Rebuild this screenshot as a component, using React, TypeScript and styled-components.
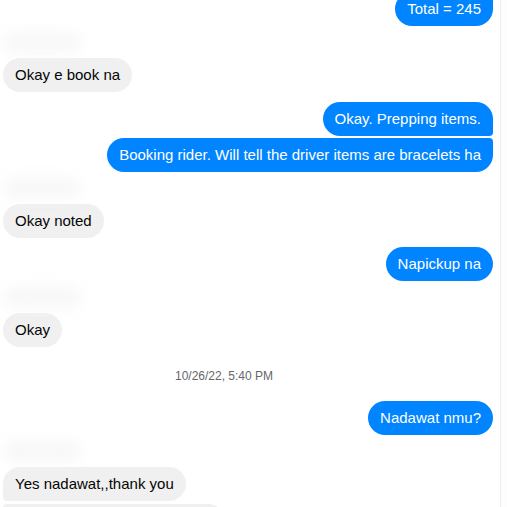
import React from "react";
import styled, { createGlobalStyle, css } from "styled-components";

// Types
type Pos = "single" | "first" | "middle" | "last";

type Message = {
  kind: "msg";
  text: string;
  out: boolean;
  pos: Pos;
  top: number;
  sender?: boolean;
  width?: number;
};

type Stamp = {
  kind: "stamp";
  text: string;
};

type Item = Message | Stamp;

// Data
const items: Item[] = [
  { kind: "msg", text: "Total = 245", out: true, pos: "last", top: -8 },
  { kind: "msg", text: "Okay e book na", out: false, pos: "single", top: 0, sender: true },
  { kind: "msg", text: "Okay. Prepping items.", out: true, pos: "first", top: 10 },
  { kind: "msg", text: "Booking rider. Will tell the driver items are bracelets ha", out: true, pos: "last", top: 2 },
  { kind: "msg", text: "Okay noted", out: false, pos: "single", top: 0, sender: true },
  { kind: "msg", text: "Napickup na", out: true, pos: "single", top: 9 },
  { kind: "msg", text: "Okay", out: false, pos: "single", top: 0, sender: true },
  { kind: "stamp", text: "10/26/22, 5:40 PM" },
  { kind: "msg", text: "Nadawat nmu?", out: true, pos: "single", top: 0 },
  { kind: "msg", text: "Yes nadawat,,thank you", out: false, pos: "first", top: 0, sender: true },
  // next bubble only peeks in at the bottom edge
  { kind: "msg", text: "", out: false, pos: "last", top: 3, width: 222 },
];

// Styles
const GlobalStyle = createGlobalStyle`
  html, body {
    margin: 0;
    padding: 0;
    background: #ffffff;
    overflow: hidden;
  }
  body {
    font-family: "Liberation Sans", Arial, sans-serif;
  }
`;

const Root = styled.div`
  width: 507px;
  height: 507px;
  display: flex;
  overflow: hidden;
`;

const Thread = styled.div`
  width: 500px;
  padding: 0 7px 0 3px;
  box-sizing: border-box;
  display: flex;
  flex-direction: column;
  & > * {
    flex-shrink: 0;
  }
`;

const ScrollEdge = styled.div`
  flex: 1;
  border-left: 1px solid #efefef;
  background: #fdfdfd;
`;

const Row = styled.div<{ $out: boolean; $top: number }>`
  display: flex;
  justify-content: ${(p) => (p.$out ? "flex-end" : "flex-start")};
  margin-top: ${(p) => p.$top}px;
`;

const big = "18px";
const small = "4px";

const radius = (out: boolean, pos: Pos) => {
  const a = pos === "single" || pos === "first" ? big : small;
  const b = pos === "single" || pos === "last" ? big : small;
  return out
    ? css`border-radius: ${big} ${a} ${b} ${big};`
    : css`border-radius: ${a} ${big} ${big} ${b};`;
};

const Bubble = styled.div<{ $out: boolean; $pos: Pos; $width?: number }>`
  height: 34px;
  line-height: 34px;
  padding: 0 12px;
  font-size: 15px;
  white-space: nowrap;
  box-sizing: border-box;
  width: ${(p) => (p.$width ? `${p.$width}px` : "auto")};
  background: ${(p) => (p.$out ? "#0084ff" : "#f0f0f0")};
  color: ${(p) => (p.$out ? "#ffffff" : "#050505")};
  ${(p) => radius(p.$out, p.$pos)}
`;

const Sender = styled.div`
  height: 32px;
  display: flex;
  align-items: center;
  div {
    width: 78px;
    height: 20px;
    border-radius: 10px;
    background: #f7f7f7;
    filter: blur(7px);
  }
`;

const TimeStamp = styled.div`
  padding: 23px 48px 19px 0;
  line-height: 12px;
  text-align: center;
  font-size: 12px;
  color: #65676b;
`;

const App = () => {
  return (
    <Root>
      <GlobalStyle />
      <Thread>
        {items.map((item, i) =>
          item.kind === "stamp" ? (
            <TimeStamp key={i}>{item.text}</TimeStamp>
          ) : (
            <React.Fragment key={i}>
              {item.sender && (
                <Sender>
                  <div />
                </Sender>
              )}
              <Row $out={item.out} $top={item.top}>
                <Bubble $out={item.out} $pos={item.pos} $width={item.width}>
                  {item.text}
                </Bubble>
              </Row>
            </React.Fragment>
          )
        )}
      </Thread>
      <ScrollEdge />
    </Root>
  );
};

export default App;
